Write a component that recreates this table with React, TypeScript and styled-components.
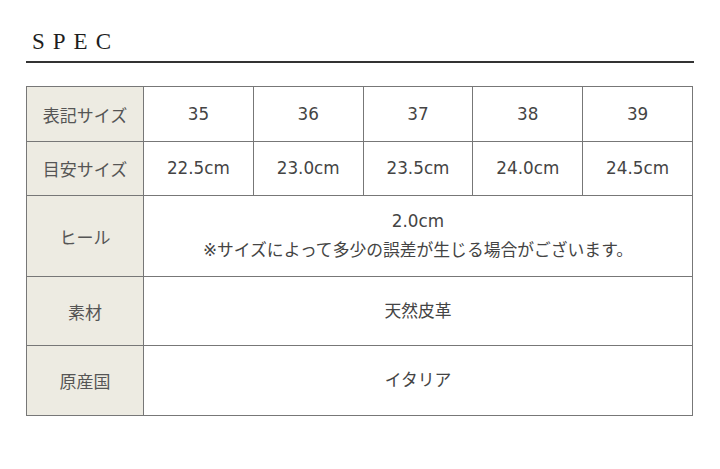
import React from 'react';
import styled, { createGlobalStyle } from 'styled-components';

const GlobalStyle = createGlobalStyle`
  html, body {
    margin: 0;
    padding: 0;
    background: #fff;
  }
  body {
    font-family: 'DejaVu Sans', 'Noto Sans CJK JP', sans-serif;
  }
`;

const Page = styled.div`
  width: 720px;
  height: 469px;
  padding: 28px 26px 0 26px;
  box-sizing: border-box;
`;

const Heading = styled.h2`
  margin: 0;
  padding: 0 0 6px 6px;
  width: 668px;
  box-sizing: border-box;
  font-family: 'Liberation Serif', serif;
  font-weight: normal;
  font-size: 23px;
  line-height: 27px;
  letter-spacing: 8px;
  color: #1e1e1e;
  border-bottom: 2px solid #333;
`;

const Table = styled.table`
  margin-top: 23px;
  width: 667px;
  border-collapse: collapse;
  table-layout: fixed;
  border: 1.5px solid #6e6e6e;
`;

const Row = styled.tr<{ $h: number }>`
  height: ${(p) => p.$h}px;
`;

const Label = styled.th`
  width: 116px;
  background: #edebe2;
  border: 1px solid #777;
  font-weight: normal;
  font-size: 17px;
  color: #555;
  text-align: center;
  padding: 0;
  font-family: 'Noto Sans CJK JP', sans-serif;
`;

const Cell = styled.td`
  border: 1px solid #777;
  font-size: 16.8px;
  color: #444;
  text-align: center;
  padding: 0;
  line-height: 29px;
  font-family: 'DejaVu Sans', 'Noto Sans CJK JP', sans-serif;
`;

const sizes = ['35', '36', '37', '38', '39'];
const lengths = ['22.5cm', '23.0cm', '23.5cm', '24.0cm', '24.5cm'];

export default function App() {
  return (
    <>
      <GlobalStyle />
      <Page>
        <Heading>SPEC</Heading>
        <Table>
          <tbody>
            <Row $h={55}>
              <Label>表記サイズ</Label>
              {sizes.map((s) => (
                <Cell key={s}>{s}</Cell>
              ))}
            </Row>
            <Row $h={54}>
              <Label>目安サイズ</Label>
              {lengths.map((l) => (
                <Cell key={l}>{l}</Cell>
              ))}
            </Row>
            <Row $h={81}>
              <Label>ヒール</Label>
              <Cell colSpan={5}>
                2.0cm
                <br />
                ※サイズによって多少の誤差が生じる場合がございます。
              </Cell>
            </Row>
            <Row $h={69}>
              <Label>素材</Label>
              <Cell colSpan={5}>天然皮革</Cell>
            </Row>
            <Row $h={70}>
              <Label>原産国</Label>
              <Cell colSpan={5}>イタリア</Cell>
            </Row>
          </tbody>
        </Table>
      </Page>
    </>
  );
}
